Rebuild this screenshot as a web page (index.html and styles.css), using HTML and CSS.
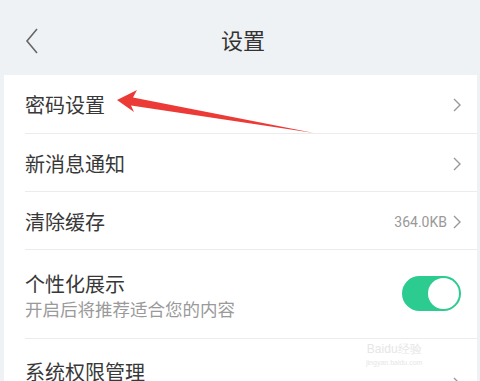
FILE: index.html
```html
<!DOCTYPE html>
<html lang="zh">
<head>
<meta charset="utf-8">
<link rel="stylesheet" href="styles.css">
</head>
<body>
<div class="page">
  <header class="topbar">
    <svg class="back" width="14" height="26" viewBox="0 0 14 26"><path d="M12 1 L2 13 L12 25" fill="none" stroke="#666" stroke-width="1.6"/></svg>
    <h1 class="title">设置</h1>
  </header>
  <ul class="list">
    <li class="row first">
      <span class="label">密码设置</span>
      <span class="right"><svg class="chev" width="8" height="14" viewBox="0 0 8 14"><path d="M1 1 L7 7 L1 13" fill="none" stroke="#999" stroke-width="1.4"/></svg></span>
    </li>
    <li class="row">
      <span class="label">新消息通知</span>
      <span class="right"><svg class="chev" width="8" height="14" viewBox="0 0 8 14"><path d="M1 1 L7 7 L1 13" fill="none" stroke="#999" stroke-width="1.4"/></svg></span>
    </li>
    <li class="row">
      <span class="label">清除缓存</span>
      <span class="right"><span class="value">364.0KB</span><svg class="chev" width="8" height="14" viewBox="0 0 8 14"><path d="M1 1 L7 7 L1 13" fill="none" stroke="#999" stroke-width="1.4"/></svg></span>
    </li>
    <li class="row tall">
      <span class="stack">
        <span class="label">个性化展示</span>
        <span class="sub">开启后将推荐适合您的内容</span>
      </span>
      <span class="toggle"><span class="knob"></span></span>
    </li>
    <li class="row last">
      <span class="label">系统权限管理</span>
      <span class="right"><svg class="chev" width="8" height="14" viewBox="0 0 8 14"><path d="M1 1 L7 7 L1 13" fill="none" stroke="#999" stroke-width="1.4"/></svg></span>
    </li>
  </ul>
  <svg class="arrow" width="480" height="381" viewBox="0 0 480 381">
    <polygon points="117,100 137,90 133,97.5 314,133 131,105.5 134,112" fill="#ec3a36"/>
  </svg>
  <div class="watermark">Baidu经验<br><small>jingyan.baidu.com</small></div>
</div>
</body>
</html>
```
FILE: styles.css
```css
* { box-sizing: border-box; }
html, body { margin: 0; padding: 0; }
body {
  width: 480px;
  height: 381px;
  overflow: hidden;
  background: #eff2f4;
  font-family: "Noto Sans CJK SC", "Noto Sans", sans-serif;
  color: #383838;
}
.page { position: relative; width: 480px; height: 381px; overflow: hidden; }
.topbar {
  height: 75px;
  display: flex;
  align-items: center;
  justify-content: center;
  position: relative;
  padding-top: 2px;
}
.back { position: absolute; left: 25px; top: 28px; }
.title {
  margin: 0;
  font-size: 22px;
  font-weight: normal;
  color: #333;
  padding-left: 6px;
}
.list {
  list-style: none;
  margin: 0 3px 0 4px;
  padding: 0 0 0 21px;
  background: #fff;
  height: 306px;
  overflow: hidden;
}
.row {
  height: 58px;
  display: flex;
  align-items: center;
  justify-content: space-between;
  border-bottom: 1px solid #ececec;
  padding-right: 16px;
  padding-top: 2px;
}
.row.first { height: 59px; }
.row.tall { height: 89px; padding-top: 0; }
.row.last { border-bottom: none; height: 48px; align-items: flex-start; padding-top: 20px; }
.label { font-size: 20px; line-height: 26px; }
.stack { display: flex; flex-direction: column; padding-top: 2px; }
.sub { font-size: 17.5px; color: #9a9a9a; line-height: 23px; }
.right { display: flex; align-items: center; gap: 6px; }
.value { font-size: 14px; color: #999; font-family: "Roboto", "Noto Sans", sans-serif; }
.chev { display: block; }
.row.last .chev { margin-top: 18px; }
.toggle {
  width: 59px;
  height: 35px;
  border-radius: 17.5px;
  background: #2ccb8f;
  position: relative;
  margin-top: -2px;
}
.knob {
  position: absolute;
  right: 2px;
  top: 2px;
  width: 31px;
  height: 31px;
  border-radius: 50%;
  background: #fff;
}
.arrow { position: absolute; left: 0; top: 0; pointer-events: none; }
.watermark {
  position: absolute;
  left: 366px;
  top: 343px;
  font-size: 12px;
  line-height: 12px;
  color: #e6e6e6;
  text-align: center;
  font-family: "Liberation Sans", sans-serif;
}
.watermark small { font-size: 7px; }
```
